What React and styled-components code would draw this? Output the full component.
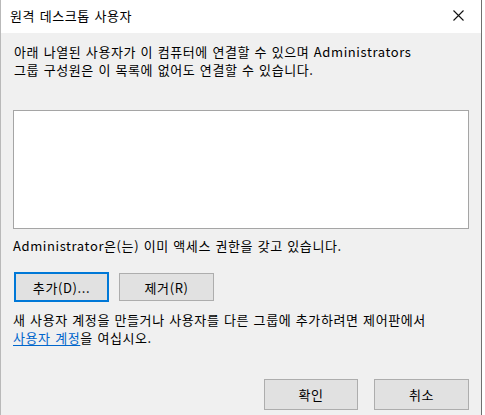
import React from 'react';
import styled, { createGlobalStyle } from 'styled-components';

const GlobalStyle = createGlobalStyle`
  html, body {
    margin: 0;
    padding: 0;
    background: #ffffff;
  }
  body {
    font-family: "Noto Sans CJK KR", "Noto Sans", sans-serif;
    font-size: 13px;
    letter-spacing: 0.6px;
    word-spacing: 1px;
    color: #000;
  }
`;

const Window = styled.div`
  width: 482px;
  height: 415px;
  box-sizing: border-box;
  border-left: 1px solid #b9b9b9;
  border-right: 1px solid #6f6f6f;
  display: flex;
  flex-direction: column;
  background: #f0f0f0;
`;

const TitleBar = styled.div`
  height: 33px;
  flex: none;
  background: #ffffff;
  display: flex;
  align-items: center;
  justify-content: space-between;
  padding: 0 0 0 9px;
`;

const Title = styled.span`
  font-size: 13px;
  line-height: 18px;
  margin-top: -2px;
`;

const CloseButton = styled.div`
  width: 46px;
  height: 33px;
  display: flex;
  align-items: center;
  justify-content: center;
  margin-top: -3px;
`;

const Body = styled.div`
  flex: 1;
  display: flex;
  flex-direction: column;
  padding: 10px 12px 5px 12px;
`;

const Text = styled.p`
  margin: ${p => p.$mt || 0}px 0 0 ${p => p.$ml || 0}px;
  font-size: 13px;
  line-height: 18px;
`;

const ListBox = styled.div`
  margin-top: 31px;
  height: 119px;
  box-sizing: border-box;
  background: #ffffff;
  border: 1px solid #a5a5a5;
`;

const Row = styled.div`
  display: flex;
  gap: ${p => p.$gap}px;
  justify-content: ${p => p.$end ? 'flex-end' : 'flex-start'};
  margin-top: ${p => p.$mt}px;
  padding-left: ${p => p.$pl || 0}px;
`;

const Button = styled.button`
  width: ${p => p.$w || 95}px;
  height: ${p => p.$h || 30}px;
  box-sizing: border-box;
  background: #e1e1e1;
  border: ${p => p.$focus ? '2px solid #0078d7' : '1px solid #adadad'};
  font-family: inherit;
  font-size: 13px;
  letter-spacing: 0.6px;
  color: #000;
  padding: 0;
  margin-top: ${p => p.$mt || 0}px;
`;

const Link = styled.a`
  color: #0066cc;
  text-decoration: underline;
  text-underline-offset: 2px;
`;

export default function App() {
  return (
    <>
      <GlobalStyle />
      <Window>
        <TitleBar>
          <Title>원격 데스크톱 사용자</Title>
          <CloseButton>
            <svg width="11" height="11" viewBox="0 0 11 11">
              <path d="M0.5 0.5 L10.5 10.5 M10.5 0.5 L0.5 10.5" stroke="#111" strokeWidth="1.1" fill="none" />
            </svg>
          </CloseButton>
        </TitleBar>
        <Body>
          <Text $ml={1}>
            아래 나열된 사용자가 이 컴퓨터에 연결할 수 있으며 Administrators<br />
            그룹 구성원은 이 목록에 없어도 연결할 수 있습니다.
          </Text>
          <ListBox />
          <Text $mt={8}>Administrator은(는) 이미 액세스 권한을 갖고 있습니다.</Text>
          <Row $gap={10} $mt={17} $pl={1}>
            <Button $focus>추가(D)...</Button>
            <Button $h={28} $mt={1}>제거(R)</Button>
          </Row>
          <Text $mt={9}>
            새 사용자 계정을 만들거나 사용자를 다른 그룹에 추가하려면 제어판에서<br />
            <Link>사용자 계정</Link>을 여십시오.
          </Text>
          <Row $gap={16} $mt={32} $end>
            <Button $w={94} $h={31}>확인</Button>
            <Button $w={95} $h={31}>취소</Button>
          </Row>
        </Body>
      </Window>
    </>
  );
}
